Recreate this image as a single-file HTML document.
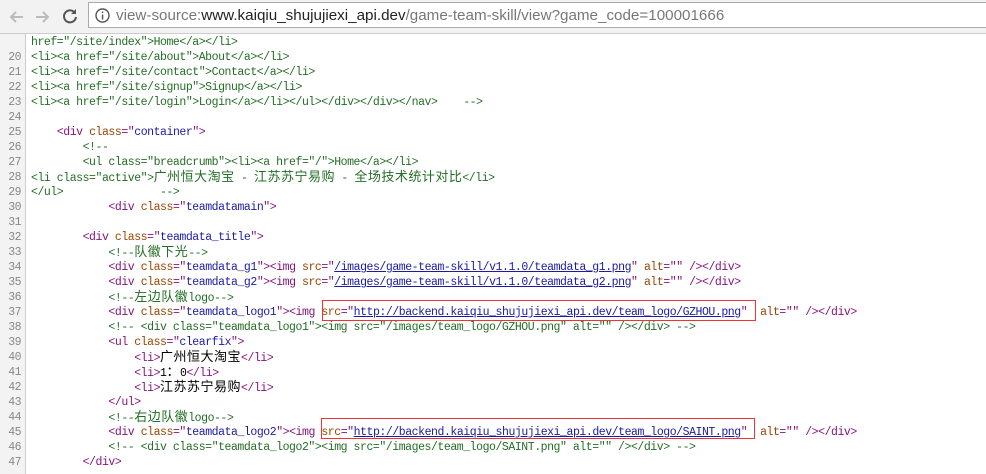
<!DOCTYPE html>
<html><head><meta charset="utf-8"><style>
body{margin:0;width:986px;height:473px;overflow:hidden;background:#fff;position:relative;font-family:"Liberation Mono","Noto Sans CJK SC",monospace}
#bar{position:absolute;left:0;top:0;width:986px;height:33px;background:#f2f2f2;border-bottom:1px solid #ccc}
#addr{position:absolute;left:88px;top:2px;width:900px;height:26px;background:#fff;border:1px solid #aaa;border-right:none;font-family:"Liberation Sans",sans-serif;font-size:15.2px;line-height:26px;color:#777;box-sizing:border-box;padding-left:27px;white-space:nowrap}
#addr b{font-weight:normal;color:#222}
#gut{position:absolute;left:0;top:34px;width:25px;height:440px;background:#f3f3f3;border-right:1px solid #ccc}
.l{position:absolute;left:31px;height:15px;line-height:15px;font-size:11.5px;letter-spacing:-0.45px;white-space:pre;color:#000}
.n{position:absolute;left:0;width:21px;text-align:right;height:15px;line-height:15px;font-size:11.5px;letter-spacing:-0.5px;color:#888}
.t{color:#881280}.a{color:#994500}.v{color:#1a1aa6}.c{color:#236e25}
.u{color:#1a1aa6;text-decoration:underline}
.z{font-size:13px;letter-spacing:0.5px}
.box{position:absolute;border:1px solid #e33;box-sizing:border-box}
</style></head><body>
<div id="bar">
<svg style="position:absolute;left:8px;top:8px" width="18" height="18"><path d="M15 9H3M8 4L3 9l5 5" stroke="#bbb" stroke-width="2" fill="none"/></svg>
<svg style="position:absolute;left:33px;top:8px" width="18" height="18"><path d="M3 9h12M10 4l5 5-5 5" stroke="#bbb" stroke-width="2" fill="none"/></svg>
<svg style="position:absolute;left:61px;top:7px" width="18" height="18"><path d="M14 6A6 6 0 1 0 15 10" stroke="#555" stroke-width="2" fill="none"/><path d="M15 2v5h-5z" fill="#555"/></svg>
<div id="addr"><svg style="position:absolute;left:6px;top:5px" width="15" height="15"><circle cx="7.5" cy="7.5" r="6.5" stroke="#555" stroke-width="1.4" fill="none"/><rect x="6.8" y="6.5" width="1.5" height="5" fill="#555"/><rect x="6.8" y="3.5" width="1.5" height="1.6" fill="#555"/></svg>view-source:<b>www.kaiqiu_shujujiexi_api.dev</b>/game-team-skill/view?game_code=100001666</div>
</div>
<div id="gut"></div>
<div class="l c" style="top:35px">href="/site/index"&gt;Home&lt;/a&gt;&lt;/li&gt;</div>
<div class="n" style="top:50px">20</div><div class="l c" style="top:50px">&lt;li&gt;&lt;a href="/site/about"&gt;About&lt;/a&gt;&lt;/li&gt;</div>
<div class="n" style="top:65px">21</div><div class="l c" style="top:65px">&lt;li&gt;&lt;a href="/site/contact"&gt;Contact&lt;/a&gt;&lt;/li&gt;</div>
<div class="n" style="top:80px">22</div><div class="l c" style="top:80px">&lt;li&gt;&lt;a href="/site/signup"&gt;Signup&lt;/a&gt;&lt;/li&gt;</div>
<div class="n" style="top:95px">23</div><div class="l c" style="top:95px">&lt;li&gt;&lt;a href="/site/login"&gt;Login&lt;/a&gt;&lt;/li&gt;&lt;/ul&gt;&lt;/div&gt;&lt;/div&gt;&lt;/nav&gt;    --&gt;</div>
<div class="n" style="top:110px">24</div>
<div class="n" style="top:125px">25</div><div class="l" style="top:125px">    <span class="t">&lt;div </span><span class="a">class</span><span class="t">="</span><span class="v">container</span><span class="t">"&gt;</span></div>
<div class="n" style="top:140px">26</div><div class="l c" style="top:140px">        &lt;!--</div>
<div class="n" style="top:155px">27</div><div class="l c" style="top:155px">        &lt;ul class="breadcrumb"&gt;&lt;li&gt;&lt;a href="/"&gt;Home&lt;/a&gt;&lt;/li&gt;</div>
<div class="n" style="top:170px">28</div><div class="l c" style="top:170px">&lt;li class="active"&gt;<span class="z">广州恒大淘宝</span> - <span class="z">江苏苏宁易购</span> - <span class="z">全场技术统计对比</span>&lt;/li&gt;</div>
<div class="n" style="top:185px">29</div><div class="l c" style="top:185px">&lt;/ul&gt;               --&gt;</div>
<div class="n" style="top:200px">30</div><div class="l" style="top:200px">            <span class="t">&lt;div </span><span class="a">class</span><span class="t">="</span><span class="v">teamdatamain</span><span class="t">"&gt;</span></div>
<div class="n" style="top:215px">31</div>
<div class="n" style="top:230px">32</div><div class="l" style="top:230px">        <span class="t">&lt;div </span><span class="a">class</span><span class="t">="</span><span class="v">teamdata_title</span><span class="t">"&gt;</span></div>
<div class="n" style="top:245px">33</div><div class="l c" style="top:245px">            &lt;!--<span class="z">队徽下光</span>--&gt;</div>
<div class="n" style="top:260px">34</div><div class="l" style="top:260px">            <span class="t">&lt;div </span><span class="a">class</span><span class="t">="</span><span class="v">teamdata_g1</span><span class="t">"&gt;&lt;img </span><span class="a">src</span><span class="t">="</span><span class="u">/images/game-team-skill/v1.1.0/teamdata_g1.png</span><span class="t">" </span><span class="a">alt</span><span class="t">="" /&gt;&lt;/div&gt;</span></div>
<div class="n" style="top:275px">35</div><div class="l" style="top:275px">            <span class="t">&lt;div </span><span class="a">class</span><span class="t">="</span><span class="v">teamdata_g2</span><span class="t">"&gt;&lt;img </span><span class="a">src</span><span class="t">="</span><span class="u">/images/game-team-skill/v1.1.0/teamdata_g2.png</span><span class="t">" </span><span class="a">alt</span><span class="t">="" /&gt;&lt;/div&gt;</span></div>
<div class="n" style="top:290px">36</div><div class="l c" style="top:290px">            &lt;!--<span class="z">左边队徽</span>logo--&gt;</div>
<div class="n" style="top:305px">37</div><div class="l" style="top:305px">            <span class="t">&lt;div </span><span class="a">class</span><span class="t">="</span><span class="v">teamdata_logo1</span><span class="t">"&gt;&lt;img </span><span class="a">src</span><span class="t">="</span><span class="u">http://backend.kaiqiu_shujujiexi_api.dev/team_logo/GZHOU.png</span><span class="t">"  </span><span class="a">alt</span><span class="t">="" /&gt;&lt;/div&gt;</span></div>
<div class="n" style="top:320px">38</div><div class="l c" style="top:320px">            &lt;!-- &lt;div class="teamdata_logo1"&gt;&lt;img src="/images/team_logo/GZHOU.png" alt="" /&gt;&lt;/div&gt; --&gt;</div>
<div class="n" style="top:335px">39</div><div class="l" style="top:335px">            <span class="t">&lt;ul </span><span class="a">class</span><span class="t">="</span><span class="v">clearfix</span><span class="t">"&gt;</span></div>
<div class="n" style="top:350px">40</div><div class="l" style="top:350px">                <span class="t">&lt;li&gt;</span><span class="z">广州恒大淘宝</span><span class="t">&lt;/li&gt;</span></div>
<div class="n" style="top:365px">41</div><div class="l" style="top:365px">                <span class="t">&lt;li&gt;</span>1<span class="z">：</span>0<span class="t">&lt;/li&gt;</span></div>
<div class="n" style="top:380px">42</div><div class="l" style="top:380px">                <span class="t">&lt;li&gt;</span><span class="z">江苏苏宁易购</span><span class="t">&lt;/li&gt;</span></div>
<div class="n" style="top:395px">43</div><div class="l" style="top:395px">            <span class="t">&lt;/ul&gt;</span></div>
<div class="n" style="top:410px">44</div><div class="l c" style="top:410px">            &lt;!--<span class="z">右边队徽</span>logo--&gt;</div>
<div class="n" style="top:425px">45</div><div class="l" style="top:425px">            <span class="t">&lt;div </span><span class="a">class</span><span class="t">="</span><span class="v">teamdata_logo2</span><span class="t">"&gt;&lt;img </span><span class="a">src</span><span class="t">="</span><span class="u">http://backend.kaiqiu_shujujiexi_api.dev/team_logo/SAINT.png</span><span class="t">"  </span><span class="a">alt</span><span class="t">="" /&gt;&lt;/div&gt;</span></div>
<div class="n" style="top:440px">46</div><div class="l c" style="top:440px">            &lt;!-- &lt;div class="teamdata_logo2"&gt;&lt;img src="/images/team_logo/SAINT.png" alt="" /&gt;&lt;/div&gt; --&gt;</div>
<div class="n" style="top:455px">47</div><div class="l" style="top:455px">        <span class="t">&lt;/div&gt;</span></div>
<div class="box" style="left:322px;top:300px;width:434px;height:21px"></div>
<div class="box" style="left:321px;top:418px;width:434px;height:21px"></div>
</body></html>
